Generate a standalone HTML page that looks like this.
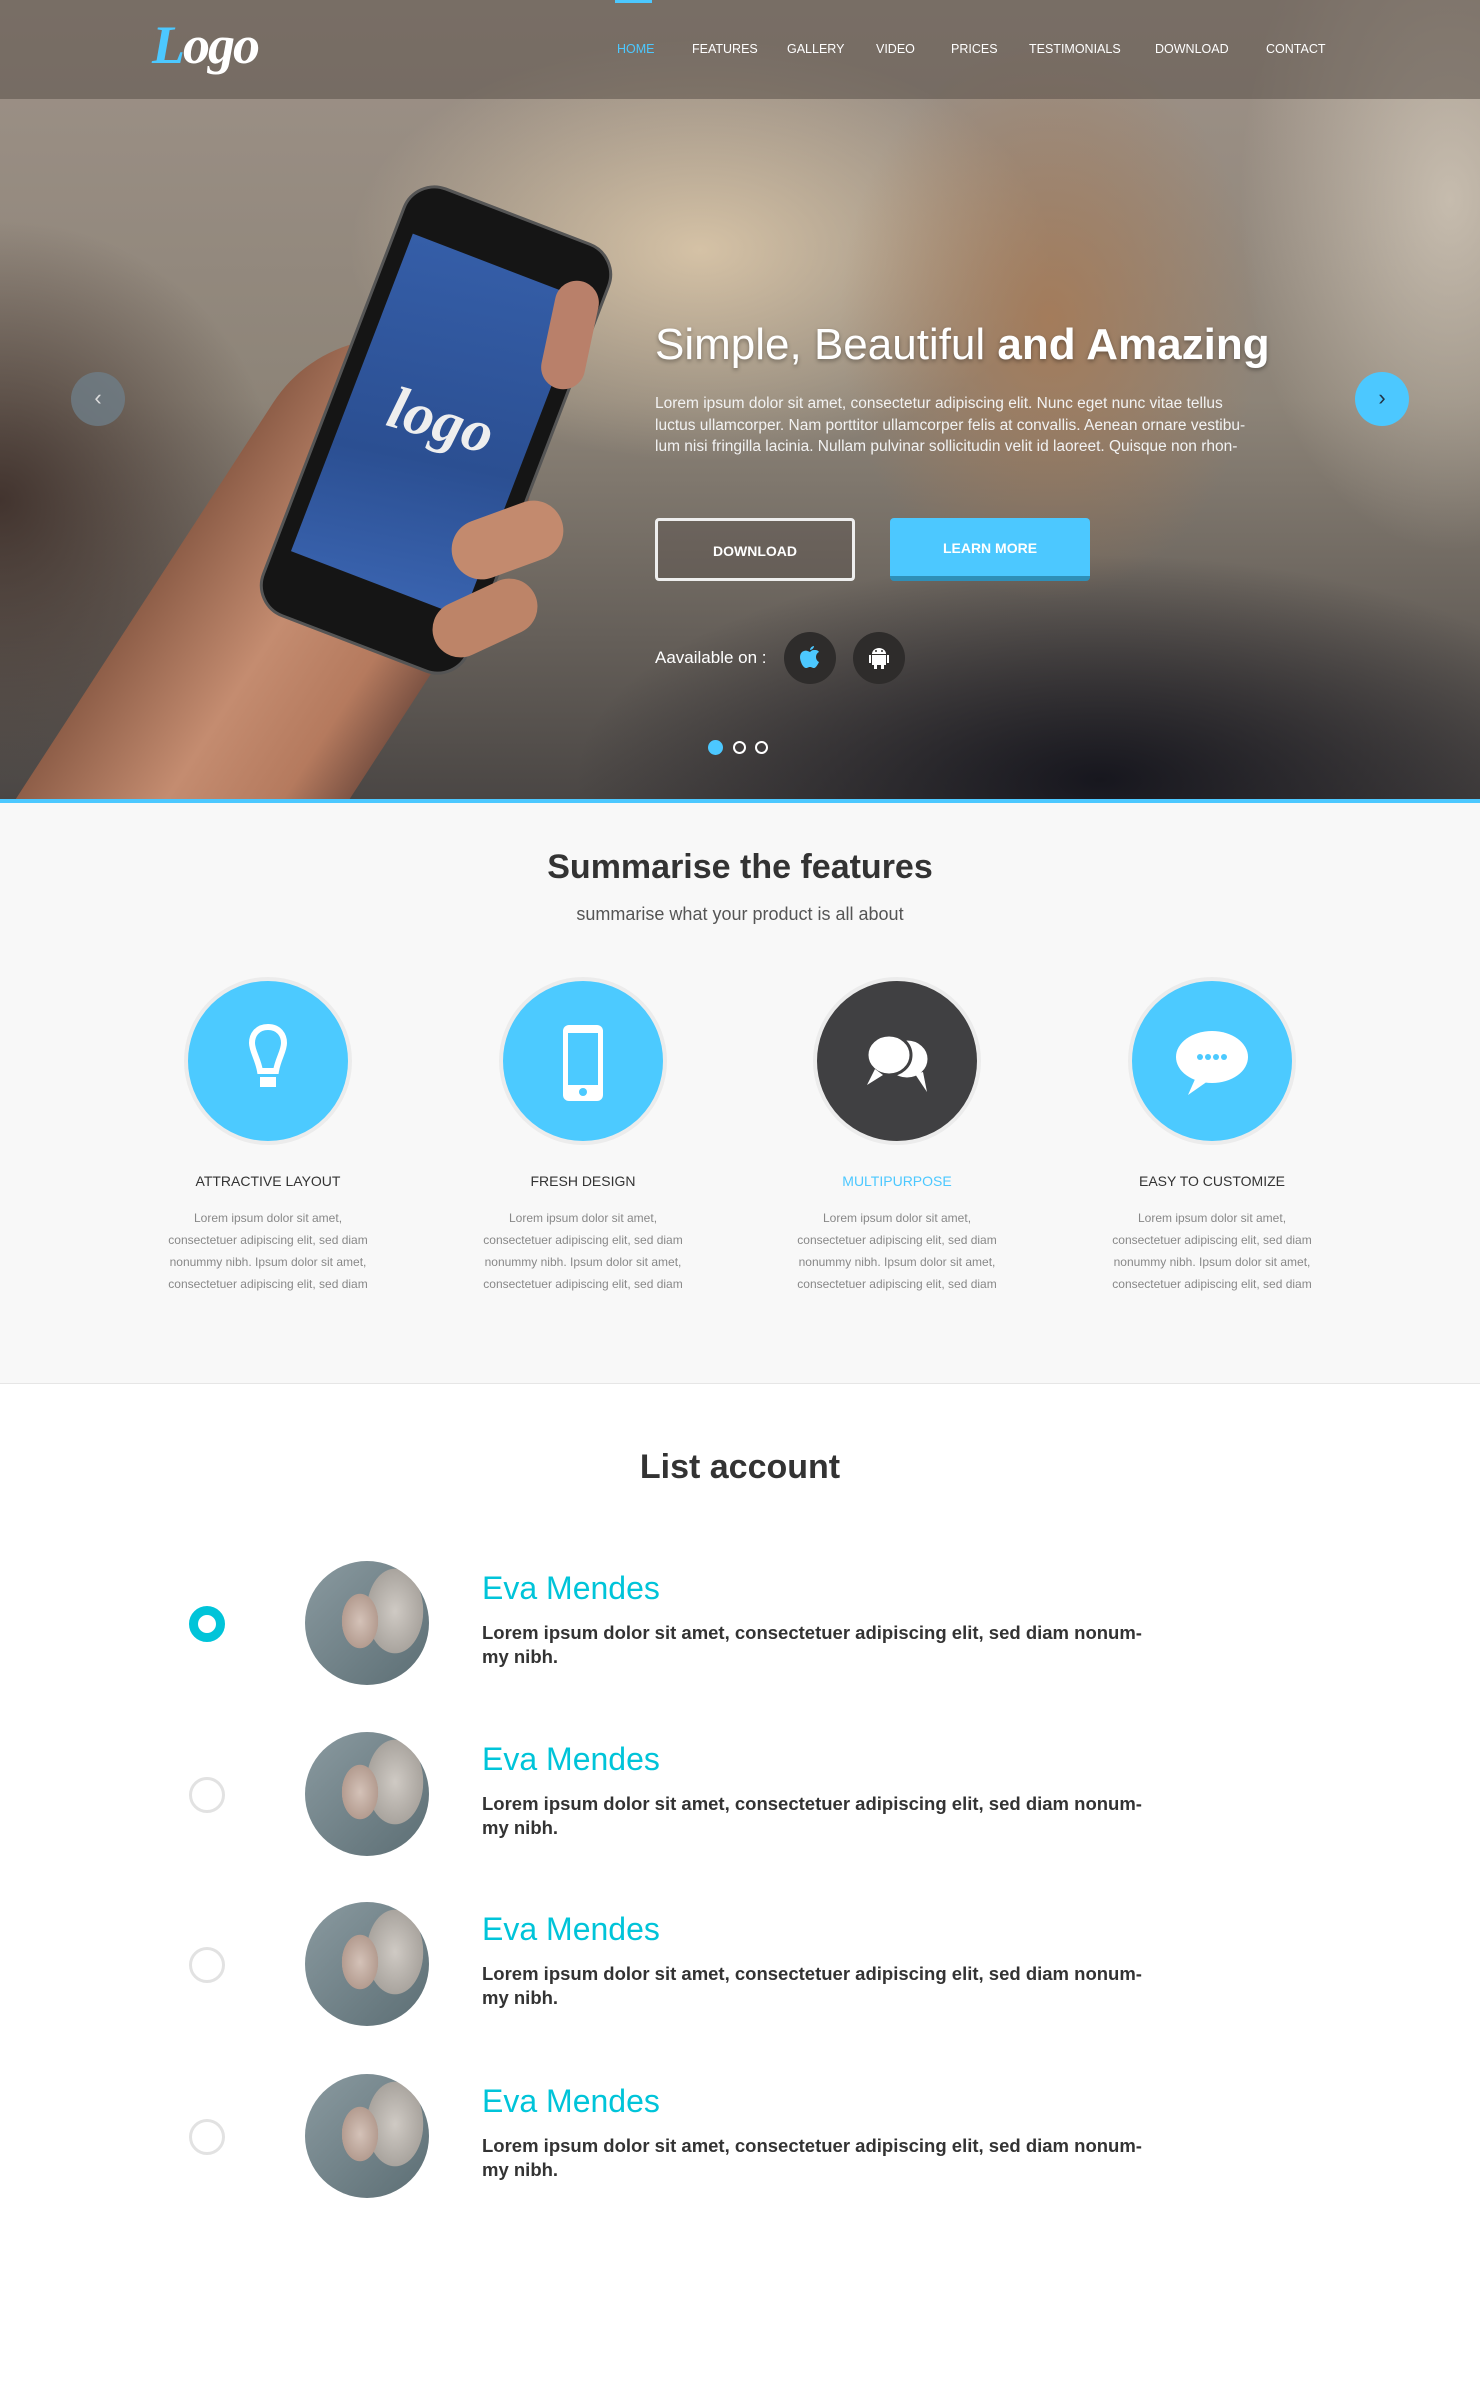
<!DOCTYPE html>
<html><head><meta charset="utf-8"><style>
*{margin:0;padding:0;box-sizing:border-box}
body{width:1480px;height:2388px;font-family:"Liberation Sans",sans-serif;background:#fff;position:relative;overflow:hidden}
.abs{position:absolute}
#hero{left:0;top:0;width:1480px;height:800px;overflow:hidden;
background:
radial-gradient(ellipse 300px 400px at 1050px 320px,rgba(170,120,80,.75),rgba(170,120,80,0) 70%),
radial-gradient(ellipse 500px 300px at 700px 250px,rgba(220,200,170,.9),rgba(220,200,170,0) 70%),
radial-gradient(ellipse 300px 500px at 1450px 200px,rgba(210,200,185,.8),rgba(210,200,185,0) 70%),
radial-gradient(ellipse 700px 300px at 1100px 780px,rgba(20,20,28,.95),rgba(20,20,28,0) 75%),
radial-gradient(ellipse 400px 400px at 0px 500px,rgba(60,45,40,.9),rgba(60,45,40,0) 70%),
linear-gradient(180deg,#9e9288 0%,#8d8478 50%,#4a4644 100%);}
#nav{left:0;top:0;width:1480px;height:99px;background:rgba(90,80,72,.55)}
.nav a{position:absolute;top:42px;font-size:12.5px;color:#fff;text-decoration:none}
.btn{position:absolute;height:63px;border-radius:4px;font-size:14px;font-weight:bold;color:#fff;text-align:center;line-height:61px}
.feat{position:absolute;width:300px;text-align:center}
.circ{width:168px;height:168px;border-radius:50%;margin:0 auto;border:4px solid #ececec;background:#4ccaff;position:relative}
.feat h4{font-size:14px;color:#333;margin-top:28px;font-weight:normal}
.feat p{font-size:12px;color:#888;line-height:22px;margin-top:18px}
.row{position:absolute;left:0;width:1480px;height:130px}
.radio{position:absolute;left:189px;top:48px;width:36px;height:36px;border-radius:50%;border:3px solid #e2e2e2}
.radio.on{border:9px solid #00c4d9}
.av{position:absolute;left:305px;top:3px;width:124px;height:124px;border-radius:50%;overflow:hidden;
background:radial-gradient(ellipse 30px 45px at 55px 60px,#d4c2b8,#b49c90 60%,rgba(0,0,0,0) 61%),radial-gradient(ellipse 40px 60px at 90px 50px,#cfcac4,#a9a49e 70%,rgba(0,0,0,0) 71%),linear-gradient(135deg,#8a9aa0,#5c6e74)}
.nm{position:absolute;left:482px;top:12px;font-size:32px;color:#00c4d9}
.tx{position:absolute;left:482px;top:63px;width:700px;font-size:18.5px;color:#333;line-height:24px;font-weight:bold;white-space:nowrap}
</style></head><body>
<div id="hero" class="abs">
 <div class="abs" style="left:120px;top:300px;width:280px;height:760px;border-radius:140px 140px 40px 40px;background:linear-gradient(90deg,#8e5e48,#c48c70 45%,#b57a5e 80%,#7e5444);transform:rotate(33deg);transform-origin:50% 50%"></div>
 <div class="abs" style="left:325px;top:200px;width:222px;height:460px;border-radius:34px;background:#151515;border:3px solid #555;transform:rotate(21deg)">
  <div class="abs" style="left:16px;top:52px;width:184px;height:340px;background:linear-gradient(170deg,#355ea8,#2b4f92 60%,#3a64b0);">
   <div style="position:absolute;left:40px;top:130px;font-family:'Liberation Serif',serif;font-style:italic;font-weight:bold;font-size:60px;color:#eee;transform:rotate(-5deg)">logo</div>
  </div>
 </div>
 <div class="abs" style="left:548px;top:280px;width:44px;height:110px;border-radius:22px;background:#b9806a;transform:rotate(12deg)"></div>
 <div class="abs" style="left:450px;top:510px;width:115px;height:60px;border-radius:30px;background:#c38a6e;transform:rotate(-20deg)"></div>
 <div class="abs" style="left:430px;top:590px;width:110px;height:56px;border-radius:28px;background:#bd8468;transform:rotate(-25deg)"></div>
</div>
<div id="nav" class="abs"></div>
<div class="abs" style="left:152px;top:14px;font-family:'Liberation Serif',serif;font-style:italic;font-weight:bold;font-size:54px;color:#fff;letter-spacing:-2px"><span style="color:#4cc8ff">L</span>ogo</div>
<div class="abs" style="left:615px;top:0;width:37px;height:3px;background:#4cc8ff"></div>
<div class="nav">
<a style="left:617px;color:#4cc8ff">HOME</a><a style="left:692px">FEATURES</a><a style="left:787px">GALLERY</a><a style="left:876px">VIDEO</a><a style="left:951px">PRICES</a><a style="left:1029px">TESTIMONIALS</a><a style="left:1155px">DOWNLOAD</a><a style="left:1266px">CONTACT</a>
</div>
<div class="abs" style="left:655px;top:320px;font-size:44px;color:#fff;text-shadow:0 2px 4px rgba(0,0,0,.35);white-space:nowrap"><span style="font-weight:300">Simple, Beautiful </span><b>and Amazing</b></div>
<div class="abs" style="left:655px;top:393px;width:700px;font-size:15.5px;line-height:21.5px;color:#f2f2f2;white-space:nowrap">Lorem ipsum dolor sit amet, consectetur adipiscing elit. Nunc eget nunc vitae tellus<br>luctus ullamcorper. Nam porttitor ullamcorper felis at convallis. Aenean ornare vestibu-<br>lum nisi fringilla lacinia. Nullam pulvinar sollicitudin velit id laoreet. Quisque non rhon-</div>
<div class="btn" style="left:655px;top:518px;width:200px;border:3px solid #eee;background:rgba(80,70,65,.3)">DOWNLOAD</div>
<div class="btn" style="left:890px;top:518px;width:200px;background:#4cc8ff;border-bottom:5px solid #2e8fb8;line-height:60px">LEARN MORE</div>
<div class="abs" style="left:655px;top:648px;font-size:17px;color:#fff">Aavailable on :</div>
<div class="abs" style="left:784px;top:632px;width:52px;height:52px;border-radius:50%;background:#2e2c2b"><svg width="52" height="52" viewBox="0 0 52 52"><path fill="#4cc8ff" d="M30 14c-2 0-4 2-4 4 2 0 4-2 4-4zM26 20c-2-1-4-2-6-1-4 1-5 6-3 11 1 3 3 6 5 6 2 0 2-1 4-1s2 1 4 1 4-4 5-6c-2-1-3-3-3-5s1-4 3-5c-1-2-3-2-5-2-2 0-3 1-4 2z"/></svg></div>
<div class="abs" style="left:853px;top:632px;width:52px;height:52px;border-radius:50%;background:#2e2c2b"><svg width="52" height="52" viewBox="0 0 52 52"><path fill="#fff" d="M19 22a7 6 0 0 1 14 0zM19 23h14v10h-2v4h-3v-4h-4v4h-3v-4h-2zM16 23h2v8h-2zM34 23h2v8h-2z"/><circle cx="23" cy="19" r="1" fill="#2e2c2b"/><circle cx="29" cy="19" r="1" fill="#2e2c2b"/></svg></div>
<div class="abs" style="left:708px;top:740px;width:15px;height:15px;border-radius:50%;background:#4cc8ff"></div>
<div class="abs" style="left:733px;top:741px;width:13px;height:13px;border-radius:50%;border:2px solid #fff"></div>
<div class="abs" style="left:755px;top:741px;width:13px;height:13px;border-radius:50%;border:2px solid #fff"></div>
<div class="abs" style="left:71px;top:372px;width:54px;height:54px;border-radius:50%;background:rgba(110,125,135,.8);color:#ddd;font-size:22px;text-align:center;line-height:52px">‹</div>
<div class="abs" style="left:1355px;top:372px;width:54px;height:54px;border-radius:50%;background:#4cc8ff;color:#234;font-size:22px;text-align:center;line-height:52px">›</div>
<div class="abs" style="left:0;top:799px;width:1480px;height:4px;background:#4cc8ff"></div>

<div class="abs" style="left:0;top:803px;width:1480px;height:581px;background:#f8f8f8;border-bottom:1px solid #e6e6e6"></div>
<div class="abs" style="left:0;top:848px;width:1480px;text-align:center;font-size:34px;font-weight:bold;color:#333">Summarise the features</div>
<div class="abs" style="left:0;top:904px;width:1480px;text-align:center;font-size:18px;color:#555">summarise what your product is all about</div>

<div class="feat" style="left:118px;top:977px"><div class="circ"><svg class="abs" style="left:50px;top:40px" width="60" height="80" viewBox="0 0 60 80"><path d="M30 6c-11 0-16 8-16 16 0 8 6 16 8 28h16c2-12 8-20 8-28 0-8-5-16-16-16z" fill="none" stroke="#fff" stroke-width="6"/><rect x="22" y="56" width="16" height="10" fill="#fff"/></svg></div><h4>ATTRACTIVE LAYOUT</h4><p>Lorem ipsum dolor sit amet,<br>consectetuer adipiscing elit, sed diam<br>nonummy nibh. Ipsum dolor sit amet,<br>consectetuer adipiscing elit, sed diam</p></div>
<div class="feat" style="left:433px;top:977px"><div class="circ"><svg class="abs" style="left:56px;top:40px" width="50" height="84" viewBox="0 0 50 84"><rect x="4" y="4" width="40" height="76" rx="6" fill="#fff"/><rect x="9" y="12" width="30" height="52" fill="#4ccaff"/><circle cx="24" cy="71" r="4" fill="#4ccaff"/></svg></div><h4>FRESH DESIGN</h4><p>Lorem ipsum dolor sit amet,<br>consectetuer adipiscing elit, sed diam<br>nonummy nibh. Ipsum dolor sit amet,<br>consectetuer adipiscing elit, sed diam</p></div>
<div class="feat" style="left:747px;top:977px"><div class="circ" style="background:#404042"><svg class="abs" style="left:38px;top:48px" width="90" height="70" viewBox="0 0 90 70"><ellipse cx="52" cy="30" rx="22" ry="20" fill="#fff" stroke="#404042" stroke-width="3"/><path d="M60 45l12 18-4-20z" fill="#fff"/><ellipse cx="34" cy="26" rx="22" ry="20" fill="#fff" stroke="#404042" stroke-width="3"/><path d="M20 40l-8 16 16-10z" fill="#fff"/></svg></div><h4 style="color:#4cc8ff">MULTIPURPOSE</h4><p>Lorem ipsum dolor sit amet,<br>consectetuer adipiscing elit, sed diam<br>nonummy nibh. Ipsum dolor sit amet,<br>consectetuer adipiscing elit, sed diam</p></div>
<div class="feat" style="left:1062px;top:977px"><div class="circ"><svg class="abs" style="left:40px;top:48px" width="80" height="72" viewBox="0 0 80 72"><ellipse cx="40" cy="28" rx="36" ry="26" fill="#fff"/><path d="M24 48l-8 18 20-14z" fill="#fff"/><g fill="#4ccaff"><circle cx="28" cy="28" r="3"/><circle cx="36" cy="28" r="3"/><circle cx="44" cy="28" r="3"/><circle cx="52" cy="28" r="3"/></g></svg></div><h4>EASY TO CUSTOMIZE</h4><p>Lorem ipsum dolor sit amet,<br>consectetuer adipiscing elit, sed diam<br>nonummy nibh. Ipsum dolor sit amet,<br>consectetuer adipiscing elit, sed diam</p></div>

<div class="abs" style="left:0;top:1448px;width:1480px;text-align:center;font-size:34px;font-weight:bold;color:#333">List account</div>

<div class="row" style="top:1558px"><div class="radio on"></div><div class="av"></div><div class="nm">Eva Mendes</div><div class="tx">Lorem ipsum dolor sit amet, consectetuer adipiscing elit, sed diam nonum-<br>my nibh.</div></div>
<div class="row" style="top:1729px"><div class="radio"></div><div class="av"></div><div class="nm">Eva Mendes</div><div class="tx">Lorem ipsum dolor sit amet, consectetuer adipiscing elit, sed diam nonum-<br>my nibh.</div></div>
<div class="row" style="top:1899px"><div class="radio"></div><div class="av"></div><div class="nm">Eva Mendes</div><div class="tx">Lorem ipsum dolor sit amet, consectetuer adipiscing elit, sed diam nonum-<br>my nibh.</div></div>
<div class="row" style="top:2071px"><div class="radio"></div><div class="av"></div><div class="nm">Eva Mendes</div><div class="tx">Lorem ipsum dolor sit amet, consectetuer adipiscing elit, sed diam nonum-<br>my nibh.</div></div>
</body></html>
